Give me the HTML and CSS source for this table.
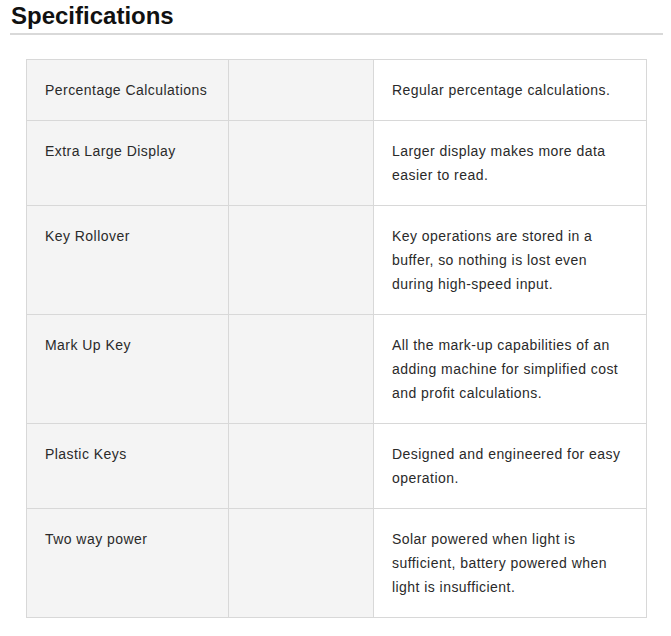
FILE: index.html
```html
<!DOCTYPE html>
<html>
<head>
<meta charset="utf-8">
<link rel="stylesheet" href="styles.css">
</head>
<body>
<section class="specs">
  <h2 class="specs-title">Specifications</h2>
  <div class="specs-table">
    <div class="cell name">Percentage Calculations</div><div class="cell blank"></div><div class="cell desc">Regular percentage calculations.</div>
    <div class="cell name">Extra Large Display</div><div class="cell blank"></div><div class="cell desc">Larger display makes more data easier to read.</div>
    <div class="cell name">Key Rollover</div><div class="cell blank"></div><div class="cell desc">Key operations are stored in a buffer, so nothing is lost even during high-speed input.</div>
    <div class="cell name">Mark Up Key</div><div class="cell blank"></div><div class="cell desc">All the mark-up capabilities of an adding machine for simplified cost and profit calculations.</div>
    <div class="cell name">Plastic Keys</div><div class="cell blank"></div><div class="cell desc">Designed and engineered for easy operation.</div>
    <div class="cell name">Two way power</div><div class="cell blank"></div><div class="cell desc">Solar powered when light is sufficient, battery powered when light is insufficient.</div>
  </div>
</section>
</body>
</html>
```
FILE: styles.css
```css
html, body {
  margin: 0;
  padding: 0;
  background: #fff;
}
body {
  font-family: "Liberation Sans", Arial, sans-serif;
  color: #222;
}
.specs {
  width: 653px;
  margin-left: 10px;
  padding-top: 2px;
}
.specs-title {
  margin: 0;
  padding: 0 0 3px 1px;
  font-size: 24px;
  line-height: 28px;
  font-weight: bold;
  color: #111;
  border-bottom: 2px solid #d9d9d9;
}
.specs-table {
  display: grid;
  grid-template-columns: 202px 145px 273px;
  margin: 24px 16px 0 16px;
  border-left: 1px solid #d8d8d8;
  border-top: 1px solid #d8d8d8;
}
.cell {
  border-right: 1px solid #d8d8d8;
  border-bottom: 1px solid #d8d8d8;
  padding: 18px 18px;
  font-size: 14px;
  line-height: 24px;
  letter-spacing: 0.45px;
  color: #2a2a2a;
}
.name, .blank {
  background: #f4f4f4;
}
.desc {
  background: #fff;
}
```
